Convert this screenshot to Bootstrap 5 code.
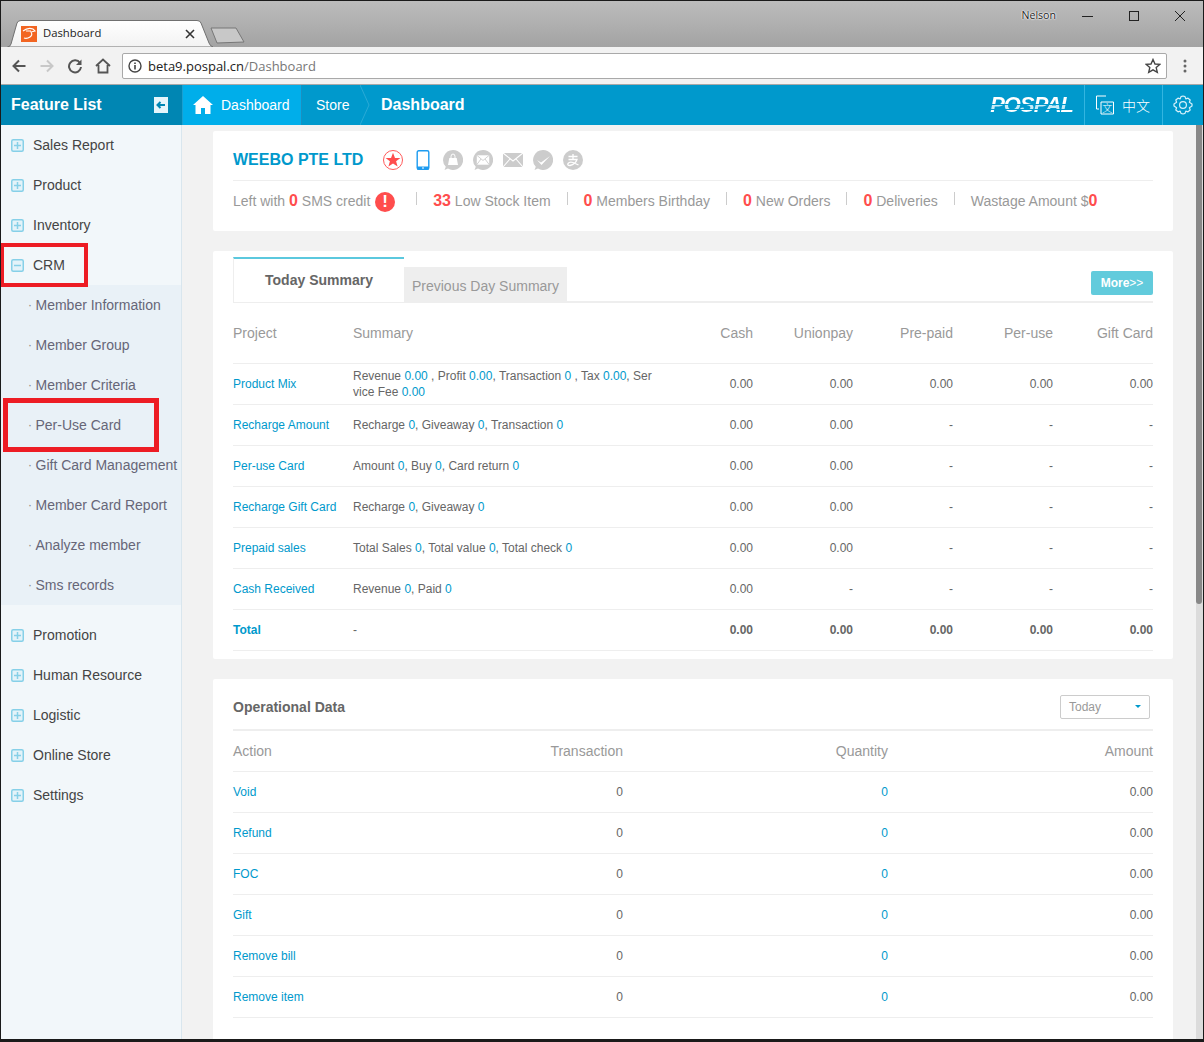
<!DOCTYPE html>
<html lang="en">
<head>
<meta charset="utf-8">
<title>Dashboard</title>
<link href="https://cdn.jsdelivr.net/npm/bootstrap@5.3.0/dist/css/bootstrap.min.css" rel="stylesheet">
<style>
html,body{height:100%;margin:0;overflow:hidden;background:#1a1a1a}
body{font-family:"Liberation Sans",Arial,sans-serif;font-size:14px;color:#666}
.app-win{height:1038px;width:1202px;margin-top:1px;margin-left:1px;background:#f2f2f2;overflow:hidden}
.tabstrip{height:46px;background:linear-gradient(#bcbcbc,#a3a3a3);padding:19px 0 0 6px;flex:none}
.tabshape{position:relative;width:206px;height:27px;padding:0 14px;flex:none}
.tabshape>svg.shape{position:absolute;left:0;top:0}
.tabshape>*:not(.shape){position:relative}
.tabtitle{font-family:"Open Sans","Liberation Sans",sans-serif;font-size:11.3px;color:#222;margin-left:6px}
.newtab{margin-left:-3px;margin-top:7px;flex:none}
.winctl{margin-left:auto;align-self:flex-start;margin-top:-19px;height:30px}
.winuser{font-family:"Open Sans",sans-serif;font-size:10.6px;color:#222;text-shadow:0 0 2px #fff,0 0 2px #fff,0 0 1px #fff;margin-right:26px}
.winbtns{gap:34px;margin-right:17px}
.toolbar{height:38px;background:#f2f2f2;border-bottom:1px solid #a8a8a8;padding:6px 0 5px 4px;flex:none}
.navico{width:28px;text-align:center;flex:none;line-height:0}
.omni{width:1045px;height:26px;margin-left:5px;background:#fff;border:1px solid #a9a9a9;border-radius:2px;padding:0 5px;font-family:"Open Sans","Liberation Sans",sans-serif;font-size:13px;color:#222;flex:none}
.omni-host{margin-left:6px;padding-top:1px}
.omni-path{color:#777}
.topbar{height:40px;background:#0099cc;color:#fff;flex:none}
.fl-head{width:181px;background:#0086b3;padding:0 14px 0 10px;font-size:16px;font-weight:700;flex:none}
.hometab{width:120px;background:#00aeea;padding-left:10px;border-left:1px solid #1a9fd0;border-right:1px solid #1a8fc0;gap:8px;flex:none}
.storetab{width:58px;padding-left:14px;flex:none;position:relative}
.crumbchev{position:absolute;right:-10px;top:0}
.crumbnow{margin-left:21px;font-size:16px;font-weight:700}
.pospal-logo{margin-left:auto;font-size:22px;font-weight:700;font-style:italic;letter-spacing:-1px;line-height:18px;height:18px;background:linear-gradient(#fff 0 8px,#0099cc 8px 9px,#c5ecf8 9px 13px,#0099cc 13px 14px,#fff 14px);-webkit-background-clip:text;background-clip:text;color:transparent;margin-right:11px}
.topsec{border-left:1px solid #33b5e0;height:40px;flex:none}
.langsec{width:78px;padding-left:10px;gap:7px;font-family:"Noto Sans CJK SC",sans-serif;font-weight:300;font-size:14px}
.gearsec{width:41px;justify-content:center}
.bodyrow{min-height:0}
.sidebar{width:180px;flex:none;background:#f2f7fa;border-right:1px solid #d9e6ee;padding:0;color:#444;box-sizing:content-box;position:relative}
.sideitem{height:40px;padding-left:10px;gap:9px}
.subblock{background:#e9f1f7;margin-bottom:10px}
.subitem{height:40px;padding-left:27px;color:#667;white-space:nowrap}
.subitem::before{content:"·";margin-right:3.5px;color:#888;font-size:12px}
.redmark{position:absolute;border-style:solid;border-color:#ed1c24;pointer-events:none}
.redmark-a{left:-1px;top:118px;width:88px;height:44px;border-width:4px}
.redmark-b{left:2px;top:273px;width:156px;height:54px;border-width:5px}
.mainpane{flex:1 1 auto;padding:6px 0 0 31px;min-width:0;overflow:hidden}
.paper{width:960px;background:#fff;border:0;border-radius:2px;margin-bottom:20px;padding:0 20px}
.compname{font-size:16px;font-weight:700;color:#0099cc;margin-right:20px;white-space:nowrap}
.titlerow{height:50px;border-bottom:1px solid #eee;padding-top:8px}
.iconrow{gap:10px}
.statrow{height:50px;color:#999;padding-bottom:10px}
.statrow b{color:#ff4d4d;font-size:16px}
.statcell{white-space:nowrap}
.statcell:first-child{margin-right:5px}
.statcell+.statcell{margin-left:16px;padding-left:17px;position:relative}
.statcell+.statcell::before{content:"";position:absolute;left:0;top:3px;height:13px;border-left:1px solid #ccc}
.alertdot{display:inline-block;width:20px;height:20px;line-height:20px;border-radius:50%;background:#ff4d4d;color:#fff;text-align:center;font-weight:700;font-size:17px;vertical-align:-1px;margin-left:1px}
.tabhead{height:46px;border-bottom:2px solid #eee;margin-top:6px;flex-wrap:nowrap}
.tabon{width:171px;height:45px;background:#fff;border-top:2px solid #5bc8de;border-left:1px solid #eee;font-weight:700;color:#666;padding-bottom:1px}
.taboff{width:163px;height:34px;margin-top:10px;background:#eee;color:#999;padding-top:4px}
.morebtn{margin-left:auto;margin-top:14px;width:62px;height:24px;padding:0;background:#62cbdc;border:0;border-radius:2px;color:#fff;font-size:12px;font-weight:700;line-height:24px}
.morebtn span{font-weight:400}
.datagrid{table-layout:fixed;width:920px;margin:0;--bs-table-color:#666;--bs-table-bg:transparent;--bs-table-border-color:#eee;font-size:12px}
.datagrid th{font-weight:400;font-size:14px;color:#999;vertical-align:middle;padding:2px 0 0;border-bottom:1px solid #eee}
.datagrid td{padding:0;height:41px;vertical-align:middle;border-bottom:1px solid #eee;line-height:16px}
.datagrid a{color:#0099cc;text-decoration:none}
.datagrid i{font-style:normal;color:#0099cc}
.headtall th{height:60px}
.headshort th{height:41px}
.w-proj{width:120px}.w-sum{width:320px}.w-c1{width:80px}.w-c2{width:100px}
.w-act{width:130px}.w-tr{width:260px}.w-q{width:265px}
.sumcell{padding-right:20px!important}
.totalrow td,.totalrow a{font-weight:700}
.totalrow td.sumcell{font-weight:400}
.opshead{height:52px;border-bottom:2px solid #eee;padding:6px 3px 0 0}
.opstitle{font-weight:700;color:#666;padding-top:2px}
.rangebtn{width:90px;height:24px;padding:0 8px;background:#fff;border:1px solid #ccc;border-radius:2px;color:#999;font-size:12px;text-align:left;display:flex;align-items:center;justify-content:space-between}
.rangebtn.dropdown-toggle::after{border-top-color:#0099cc;border-width:3px 3px 0;margin-right:0}
.scrolltrack{width:7px;flex:none;background:#dcdcdc}
.scrollthumb{width:6px;height:479px;background:#888;border-radius:0 0 3px 3px}
</style>
</head>
<body>
<div class="app-win d-flex flex-column">
  <div class="tabstrip d-flex align-items-start">
    <div class="tabshape d-flex align-items-center">
      <svg class="shape" width="206" height="27" viewBox="0 0 206 27"><defs><linearGradient id="tg" x1="0" y1="0" x2="0" y2="1"><stop offset="0" stop-color="#fff"/><stop offset="1" stop-color="#f2f2f2"/></linearGradient></defs><path d="M0.5 27 Q3 27 4 24 L10 3 Q11 0.5 14 0.5 L190 0.5 Q193 0.5 194 3 L202 23 Q203 26 206 27 Z" fill="url(#tg)" stroke="#707070"/></svg>
      <svg width="16" height="16" viewBox="0 0 16 16"><rect width="16" height="16" fill="#f26522"/><path d="M2 5 Q7 1 12 3 L14 5 L10 6 Q12 9 9 11 Q6 13 3 12 M10 5 L5 5" fill="none" stroke="#fff" stroke-width="1.1"/></svg>
      <span class="tabtitle">Dashboard</span>
      <svg class="ms-auto me-1" width="10" height="10" viewBox="0 0 10 10"><path d="M1 1 L9 9 M9 1 L1 9" stroke="#333" stroke-width="1.6"/></svg>
    </div>
    <svg class="newtab" width="36" height="17" viewBox="0 0 36 17"><path d="M1 1 L26 1 L34 15 L7 16 Z" fill="#c8c8c8" stroke="#777" stroke-linejoin="round"/></svg>
    <div class="winctl d-flex align-items-center">
      <span class="winuser">Nelson</span>
      <div class="winbtns d-flex align-items-center">
        <svg width="12" height="12" viewBox="0 0 12 12"><path d="M0 6.5 H11" stroke="#222"/></svg>
        <svg width="12" height="12" viewBox="0 0 12 12"><rect x="1.5" y="1.5" width="9" height="9" fill="none" stroke="#222"/></svg>
        <svg width="12" height="12" viewBox="0 0 12 12"><path d="M1 1 L11 11 M11 1 L1 11" stroke="#222"/></svg>
      </div>
    </div>
  </div>

  <div class="toolbar d-flex align-items-center">
    <div class="navico"><svg width="16" height="16" viewBox="0 0 16 16"><path d="M14.5 8 H2.5 M8 2.5 L2.5 8 L8 13.5" fill="none" stroke="#555" stroke-width="2"/></svg></div>
    <div class="navico"><svg width="16" height="16" viewBox="0 0 16 16"><path d="M1.5 8 H13.5 M8 2.5 L13.5 8 L8 13.5" fill="none" stroke="#c8c8c8" stroke-width="2"/></svg></div>
    <div class="navico"><svg width="16" height="16" viewBox="0 0 16 16"><path d="M13 5 A6 6 0 1 0 14 9" fill="none" stroke="#555" stroke-width="2"/><path d="M14.5 1.5 V7 H9 Z" fill="#555"/></svg></div>
    <div class="navico"><svg width="16" height="16" viewBox="0 0 16 16"><path d="M1 8 L8 1.5 L15 8 M3.5 7 V14.5 H12.5 V7" fill="none" stroke="#555" stroke-width="1.8"/></svg></div>
    <div class="omni d-flex align-items-center">
      <svg width="14" height="14" viewBox="0 0 14 14"><circle cx="7" cy="7" r="6" fill="none" stroke="#444" stroke-width="1.4"/><path d="M7 6 V10.5 M7 3.5 V5" stroke="#444" stroke-width="1.6"/></svg>
      <span class="omni-host">beta9.pospal.cn<span class="omni-path">/Dashboard</span></span>
      <svg class="ms-auto" width="16" height="16" viewBox="0 0 16 16"><path d="M8 1.5 L10 6 L14.8 6.4 L11.2 9.6 L12.3 14.4 L8 11.8 L3.7 14.4 L4.8 9.6 L1.2 6.4 L6 6 Z" fill="none" stroke="#444" stroke-width="1.4"/></svg>
    </div>
    <div class="navico ms-1"><svg width="4" height="14" viewBox="0 0 4 14"><circle cx="2" cy="2" r="1.5" fill="#666"/><circle cx="2" cy="7" r="1.5" fill="#666"/><circle cx="2" cy="12" r="1.5" fill="#666"/></svg></div>
  </div>

  <header class="topbar d-flex align-items-stretch">
    <div class="fl-head d-flex align-items-center justify-content-between">
      <span>Feature List</span>
      <svg width="16" height="16" viewBox="0 0 16 16"><rect width="16" height="16" fill="#e6f5fb"/><rect x="0" width="2" height="16" fill="#0086b3"/><path d="M13 8 H6 M8.5 5 L5.5 8 L8.5 11" fill="none" stroke="#0086b3" stroke-width="2"/></svg>
    </div>
    <div class="hometab d-flex align-items-center">
      <svg width="20" height="18" viewBox="0 0 20 18"><path d="M10 0 L20 9 L17.5 9 L17.5 18 L12 18 L12 12 L8 12 L8 18 L2.5 18 L2.5 9 L0 9 Z" fill="#fff"/></svg>
      <span>Dashboard</span>
    </div>
    <div class="storetab d-flex align-items-center">Store
      <svg class="crumbchev" width="10" height="40" viewBox="0 0 10 40"><path d="M0 0 L9 20 L0 40" fill="none" stroke="#2aaad6"/></svg>
    </div>
    <div class="crumbnow d-flex align-items-center">Dashboard</div>
    <div class="pospal-logo align-self-center">POSPAL</div>
    <div class="topsec langsec d-flex align-items-center">
      <svg width="20" height="20" viewBox="0 0 20 20"><path d="M11 1 H1.5 V14 H4 M9 7 H18.5 V19 H6 V7 H9" fill="none" stroke="#fff"/><text x="12.3" y="16.5" font-size="10" text-anchor="middle" fill="#fff" font-family="Noto Sans CJK SC">文</text></svg>
      <span>中文</span>
    </div>
    <div class="topsec gearsec d-flex align-items-center">
      <svg width="20" height="20" viewBox="0 0 20 20"><path d="M10 1 L12 1.6 L12.8 3.8 L15 3.2 L17.2 5 L16.4 7.2 L19 9 L19 11 L16.4 12.8 L17.2 15 L15 16.8 L12.8 16.2 L12 18.4 L10 19 L8 18.4 L7.2 16.2 L5 16.8 L2.8 15 L3.6 12.8 L1 11 L1 9 L3.6 7.2 L2.8 5 L5 3.2 L7.2 3.8 L8 1.6 Z" fill="none" stroke="#d5f0fa" stroke-width="1.2" stroke-linejoin="round"/><circle cx="10" cy="10" r="3.4" fill="none" stroke="#d5f0fa" stroke-width="1.2"/></svg>
    </div>
  </header>

  <div class="d-flex flex-grow-1 bodyrow">
    <aside class="sidebar">
      <svg width="0" height="0" class="d-block"><defs>
        <g id="ic-box"><rect x=".75" y=".75" width="11.5" height="11.5" rx="1.5" fill="#e4f3f9" stroke="#86d0e8" stroke-width="1.5"/></g>
        <g id="ic-plus"><use href="#ic-box"/><path d="M3 6.5 H10 M6.5 3 V10" stroke="#86d0e8" stroke-width="1.5"/></g>
        <g id="ic-minus"><use href="#ic-box"/><path d="M3 6.5 H10" stroke="#86d0e8" stroke-width="1.5"/></g>
      </defs></svg>
      <div class="sideitem d-flex align-items-center"><svg width="13" height="13"><use href="#ic-plus"/></svg>Sales Report</div>
      <div class="sideitem d-flex align-items-center"><svg width="13" height="13"><use href="#ic-plus"/></svg>Product</div>
      <div class="sideitem d-flex align-items-center"><svg width="13" height="13"><use href="#ic-plus"/></svg>Inventory</div>
      <div class="sideitem d-flex align-items-center"><svg width="13" height="13"><use href="#ic-minus"/></svg>CRM</div>
      <div class="subblock">
        <div class="subitem d-flex align-items-center">Member Information</div>
        <div class="subitem d-flex align-items-center">Member Group</div>
        <div class="subitem d-flex align-items-center">Member Criteria</div>
        <div class="subitem d-flex align-items-center">Per-Use Card</div>
        <div class="subitem d-flex align-items-center">Gift Card Management</div>
        <div class="subitem d-flex align-items-center">Member Card Report</div>
        <div class="subitem d-flex align-items-center">Analyze member</div>
        <div class="subitem d-flex align-items-center">Sms records</div>
      </div>
      <div class="sideitem d-flex align-items-center"><svg width="13" height="13"><use href="#ic-plus"/></svg>Promotion</div>
      <div class="sideitem d-flex align-items-center"><svg width="13" height="13"><use href="#ic-plus"/></svg>Human Resource</div>
      <div class="sideitem d-flex align-items-center"><svg width="13" height="13"><use href="#ic-plus"/></svg>Logistic</div>
      <div class="sideitem d-flex align-items-center"><svg width="13" height="13"><use href="#ic-plus"/></svg>Online Store</div>
      <div class="sideitem d-flex align-items-center"><svg width="13" height="13"><use href="#ic-plus"/></svg>Settings</div>
      <div class="redmark redmark-a"></div>
      <div class="redmark redmark-b"></div>
    </aside>

    <main class="mainpane">
      <section class="card paper">
        <div class="titlerow d-flex align-items-center">
          <span class="compname">WEEBO PTE LTD</span>
          <div class="iconrow d-flex align-items-center">
            <svg width="20" height="20" viewBox="0 0 20 20"><circle cx="10" cy="10" r="9.5" fill="#fff" stroke="#ff5a5a"/><path d="M10 2.8 L12 8 L17.4 8 L13.1 11.3 L14.6 16.6 L10 13.5 L5.4 16.6 L6.9 11.3 L2.6 8 L8 8 Z" fill="#ff4d4d"/></svg>
            <svg width="20" height="20" viewBox="0 0 20 20"><rect x="4.2" y=".7" width="11.6" height="18.6" rx="1.5" fill="none" stroke="#1c9bf0" stroke-width="1.4"/><rect x="4" y="16.5" width="12" height="3" fill="#1c9bf0"/><rect x="9" y="17.5" width="2" height="1" fill="#fff"/></svg>
            <svg width="20" height="20" viewBox="0 0 20 20"><path d="M10 0 A10 10 0 1 1 5 18.6 L1.5 20 L2.8 16.8 A10 10 0 0 1 10 0 Z" fill="#ccc"/><path d="M5 15 L6.3 8 H13.7 L15 15 Z" fill="#fff"/><path d="M8 8.5 V6.5 A2 2.5 0 0 1 12 6.5 V8.5" fill="none" stroke="#fff" stroke-width="1"/></svg>
            <svg width="20" height="20" viewBox="0 0 20 20"><path d="M10 0 A10 10 0 1 1 5 18.6 L1.5 20 L2.8 16.8 A10 10 0 0 1 10 0 Z" fill="#ccc"/><rect x="3.5" y="5" width="13" height="10" fill="#fff" stroke="#ccc" stroke-width=".6"/><path d="M3.5 5 L10 10.5 L16.5 5 M3.5 15 L8 9 M16.5 15 L12 9" fill="none" stroke="#ccc" stroke-width=".9"/></svg>
            <svg width="20" height="20" viewBox="0 0 20 20"><rect y="3" width="20" height="14" fill="#ccc"/><path d="M0 3 L10 11 L20 3 M0 17 L7 9 M20 17 L13 9" fill="none" stroke="#fff" stroke-width="1.1"/></svg>
            <svg width="20" height="20" viewBox="0 0 20 20"><path d="M10 0 A10 10 0 1 1 5 18.6 L1.5 20 L2.8 16.8 A10 10 0 0 1 10 0 Z" fill="#ccc"/><path d="M4 10 L8 12.5 L17 6 L8.5 15 Z" fill="#fff"/></svg>
            <svg width="20" height="20" viewBox="0 0 20 20"><circle cx="10" cy="10" r="10" fill="#ccc"/><path d="M5.5 6.5 H14.5 M10 4 V9 M5.5 9.5 H14 Q12.5 14 7 15.5 Q4 15.5 5 13.5 Q6.5 11.5 10 12.5 L15.5 15" fill="none" stroke="#fff" stroke-width="1.3"/></svg>
          </div>
        </div>
        <div class="statrow d-flex align-items-center">
          <span class="statcell">Left with <b>0</b> SMS credit <span class="alertdot">!</span></span>
          <span class="statcell"><b>33</b> Low Stock Item</span>
          <span class="statcell"><b>0</b> Members Birthday</span>
          <span class="statcell"><b>0</b> New Orders</span>
          <span class="statcell"><b>0</b> Deliveries</span>
          <span class="statcell">Wastage Amount $<b>0</b></span>
        </div>
      </section>

      <section class="card paper">
        <div class="tabhead nav">
          <div class="tabon d-flex align-items-center justify-content-center">Today Summary</div>
          <div class="taboff d-flex align-items-center justify-content-center">Previous Day Summary</div>
          <button type="button" class="btn morebtn">More<span>&gt;&gt;</span></button>
        </div>
        <table class="table datagrid">
          <thead class="headtall">
            <tr><th class="w-proj">Project</th><th class="w-sum">Summary</th><th class="w-c1 text-end">Cash</th><th class="w-c2 text-end">Unionpay</th><th class="w-c2 text-end">Pre-paid</th><th class="w-c2 text-end">Per-use</th><th class="w-c2 text-end">Gift Card</th></tr>
          </thead>
          <tbody>
            <tr><td><a href="#">Product Mix</a></td><td class="sumcell">Revenue <i>0.00</i> , Profit <i>0.00</i>, Transaction <i>0</i> , Tax <i>0.00</i>, Ser<br>vice Fee <i>0.00</i></td><td class="text-end">0.00</td><td class="text-end">0.00</td><td class="text-end">0.00</td><td class="text-end">0.00</td><td class="text-end">0.00</td></tr>
            <tr><td><a href="#">Recharge Amount</a></td><td class="sumcell">Recharge <i>0</i>, Giveaway <i>0</i>, Transaction <i>0</i></td><td class="text-end">0.00</td><td class="text-end">0.00</td><td class="text-end">-</td><td class="text-end">-</td><td class="text-end">-</td></tr>
            <tr><td><a href="#">Per-use Card</a></td><td class="sumcell">Amount <i>0</i>, Buy <i>0</i>, Card return <i>0</i></td><td class="text-end">0.00</td><td class="text-end">0.00</td><td class="text-end">-</td><td class="text-end">-</td><td class="text-end">-</td></tr>
            <tr><td><a href="#">Recharge Gift Card</a></td><td class="sumcell">Recharge <i>0</i>, Giveaway <i>0</i></td><td class="text-end">0.00</td><td class="text-end">0.00</td><td class="text-end">-</td><td class="text-end">-</td><td class="text-end">-</td></tr>
            <tr><td><a href="#">Prepaid sales</a></td><td class="sumcell">Total Sales <i>0</i>, Total value <i>0</i>, Total check <i>0</i></td><td class="text-end">0.00</td><td class="text-end">0.00</td><td class="text-end">-</td><td class="text-end">-</td><td class="text-end">-</td></tr>
            <tr><td><a href="#">Cash Received</a></td><td class="sumcell">Revenue <i>0</i>, Paid <i>0</i></td><td class="text-end">0.00</td><td class="text-end">-</td><td class="text-end">-</td><td class="text-end">-</td><td class="text-end">-</td></tr>
            <tr class="totalrow"><td><a href="#">Total</a></td><td class="sumcell">-</td><td class="text-end">0.00</td><td class="text-end">0.00</td><td class="text-end">0.00</td><td class="text-end">0.00</td><td class="text-end">0.00</td></tr>
          </tbody>
        </table>
        <div class="pb-2"></div>
      </section>

      <section class="card paper pb-5">
        <div class="opshead d-flex align-items-center justify-content-between">
          <span class="opstitle">Operational Data</span>
          <button type="button" class="btn rangebtn dropdown-toggle">Today</button>
        </div>
        <table class="table datagrid">
          <thead class="headshort">
            <tr><th class="w-act">Action</th><th class="w-tr text-end">Transaction</th><th class="w-q text-end">Quantity</th><th class="w-q text-end">Amount</th></tr>
          </thead>
          <tbody>
            <tr><td><a href="#">Void</a></td><td class="text-end">0</td><td class="text-end"><i>0</i></td><td class="text-end">0.00</td></tr>
            <tr><td><a href="#">Refund</a></td><td class="text-end">0</td><td class="text-end"><i>0</i></td><td class="text-end">0.00</td></tr>
            <tr><td><a href="#">FOC</a></td><td class="text-end">0</td><td class="text-end"><i>0</i></td><td class="text-end">0.00</td></tr>
            <tr><td><a href="#">Gift</a></td><td class="text-end">0</td><td class="text-end"><i>0</i></td><td class="text-end">0.00</td></tr>
            <tr><td><a href="#">Remove bill</a></td><td class="text-end">0</td><td class="text-end"><i>0</i></td><td class="text-end">0.00</td></tr>
            <tr><td><a href="#">Remove item</a></td><td class="text-end">0</td><td class="text-end"><i>0</i></td><td class="text-end">0.00</td></tr>
          </tbody>
        </table>
      </section>
    </main>
    <div class="scrolltrack"><div class="scrollthumb"></div></div>
  </div>
</div>
</body>
</html>
